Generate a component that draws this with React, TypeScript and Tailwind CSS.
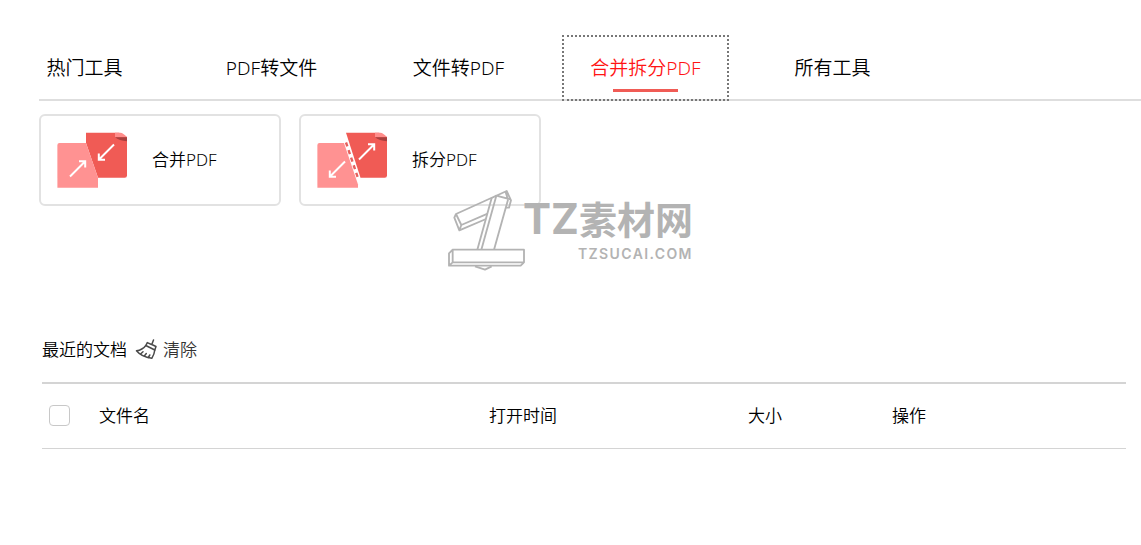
import { useState } from "react";

const tabs = ["热门工具", "PDF转文件", "文件转PDF", "合并拆分PDF", "所有工具"];

function MergeIcon() {
  return (
    <svg className="h-14 w-[70px] shrink-0" viewBox="0 0 70 56" fill="none" aria-hidden="true">
      <path d="M29 .8H62L70 5V43.500Q70 45.800 67.700 45.800H41L29 11Z" fill="#f05b55" />
      <path d="M58 .8H63.500Q66 1 70 5.200H58Z" fill="#ff8d8b" />
      <path d="M58 5.200H70V9.300Q62 8.500 58 5.200Z" fill="#a93f3e" />
      <path d="M2.500 11H29L41 45.800V55.700H.4V13Q.4 11 2.500 11Z" fill="#ff9292" />
      <path d="M57 12.500 42 27.500M41.800 21.500V27.800H48" stroke="#fff" strokeWidth="2" />
      <path d="M13 44.500 28 29.500M22 29.200H28.200V35.500" stroke="#fff" strokeWidth="2" />
    </svg>
  );
}

function SplitIcon() {
  return (
    <svg className="h-14 w-[70px] shrink-0" viewBox="0 0 70 56" fill="none" aria-hidden="true">
      <path d="M29 .8H62L70 5V43.500Q70 45.800 67.700 45.800H43.500Z" fill="#f05b55" />
      <path d="M58 .8H63.500Q66 1 70 5.200H58Z" fill="#ff8d8b" />
      <path d="M58 5.200H70V9.300Q62 8.500 58 5.200Z" fill="#a93f3e" />
      <path d="M2.500 11H27L41 52.500V55.700H.4V13Q.4 11 2.500 11Z" fill="#ff9292" />
      <path d="M29 10.500 41.300 47" stroke="#e5605d" strokeWidth="2.400" strokeDasharray="4.200 3.800" />
      <path d="M42 27.500 57 12.500M51 12.200H57.200V18.500" stroke="#fff" strokeWidth="2" />
      <path d="M28 29.500 13 44.500M12.800 38.500V44.800H19" stroke="#fff" strokeWidth="2" />
    </svg>
  );
}

function BroomIcon() {
  return (
    <svg
      className="h-[22px] w-[22px]"
      viewBox="0 0 22 22"
      fill="none"
      stroke="#4a4a4a"
      strokeWidth="1.500"
      strokeLinejoin="round"
      strokeLinecap="round"
      aria-hidden="true"
    >
      <path d="M18.500 1 16.800 5.500 21 7.500 19.800 11 10.800 6.500 12.300 3.600 16.500 5.500" />
      <path d="M10.800 6.500Q7.500 11 1.500 11.800Q6.500 18 16.800 19.300Q19.300 15.500 19.800 11" />
      <path d="M5.800 14.800 8 12.800M9.300 17 11.300 14.500M13.300 18.500 14.800 16" />
    </svg>
  );
}

function Watermark() {
  return (
    <div className="pointer-events-none absolute left-[440px] top-[183px] flex text-[#b3b3b3]">
      <svg
        className="h-[92px] w-[83px]"
        viewBox="0 0 249 276"
        fill="none"
        stroke="currentColor"
        strokeWidth="5.500"
        strokeLinejoin="round"
        overflow="visible"
        aria-hidden="true"
      >
        <path d="M38 200H252V238H38ZM38 200 27 211V248H242L252 238M38 238 27 248" />
        <path d="M155 45 112 200M169 38 124 200M204 50 162 200" />
        <path d="M138 108 58 142 43 104 48 93 200 24 213 52 207 74H197M48 93 64 126 143 92M64 126 58 142M155 45 169 38 211 49M204 50 197 28" />
        <path d="M105 250 135 260 155 250" />
      </svg>
      <div className="flex flex-col items-end pt-4">
        <div className="flex items-center leading-10">
          <span className="font-['Inter',sans-serif] text-[42px] font-bold">TZ</span>
          <span className="text-[38px] font-bold">素材网</span>
        </div>
        <div className="font-['Inter',sans-serif] text-sm font-semibold leading-[30px] tracking-widest">TZSUCAI.COM</div>
      </div>
    </div>
  );
}

export default function App() {
  const [active, setActive] = useState(3);
  return (
    <main className="relative bg-white pt-[35px] font-['Noto_Sans','Noto_Sans_CJK_SC',sans-serif] text-[17px] font-[350] text-black">
      <nav className="ml-[39px] border-b-2 border-[#dedede]">
        <div className="-mb-0.5 -ml-[38px] flex gap-5">
          {tabs.map((tab, i) => (
            <button
              key={tab}
              type="button"
              onClick={() => setActive(i)}
              className={
                i === active
                  ? "flex h-[66px] w-[167px] flex-col items-center border-2 border-dotted border-[#777] pt-[17px] text-[19px] leading-7 text-[#ff1414]"
                  : "flex h-[66px] w-[167px] flex-col items-center border-2 border-transparent pt-[17px] text-[19px] leading-7"
              }
            >
              {tab}
              {i === active && <span className="mt-[7px] h-[3px] w-[65px] bg-[#f05b55]" />}
            </button>
          ))}
        </div>
      </nav>

      <section className="ml-[39px] mt-[13px] flex gap-[18px]">
        <button type="button" className="flex h-[92px] w-[242px] items-center gap-[25px] rounded-md border-2 border-[#e2e2e2] pl-4">
          <MergeIcon />
          <span>合并PDF</span>
        </button>
        <button type="button" className="flex h-[92px] w-[242px] items-center gap-[25px] rounded-md border-2 border-[#e2e2e2] pl-4">
          <SplitIcon />
          <span>拆分PDF</span>
        </button>
      </section>

      <section className="ml-[42px] mr-[15px] mt-[128px]">
        <div className="flex h-8 items-center">
          <h2>最近的文档</h2>
          <button type="button" className="ml-2 flex items-center gap-1.5 text-[#333]">
            <BroomIcon />
            清除
          </button>
        </div>
        <table className="mt-4 w-full table-fixed border-collapse text-left">
          <colgroup>
            <col className="w-[42px]" />
            <col />
            <col className="w-[259px]" />
            <col className="w-36" />
            <col className="w-36" />
            <col className="w-[90px]" />
          </colgroup>
          <thead>
            <tr className="h-[65px] border-b border-t-2 border-b-[#d4d4d4] border-t-[#d4d4d4]">
              <th className="pl-[7px]">
                <input
                  type="checkbox"
                  aria-label="全选"
                  className="block h-[21px] w-[21px] appearance-none rounded-sm border border-[#c8c8c8] checked:bg-[#f05b55]"
                />
              </th>
              <th className="pl-[15px] font-[350]">文件名</th>
              <th className="font-[350]">打开时间</th>
              <th className="font-[350]">大小</th>
              <th className="font-[350]">操作</th>
              <th />
            </tr>
          </thead>
        </table>
      </section>
      <Watermark />
    </main>
  );
}
